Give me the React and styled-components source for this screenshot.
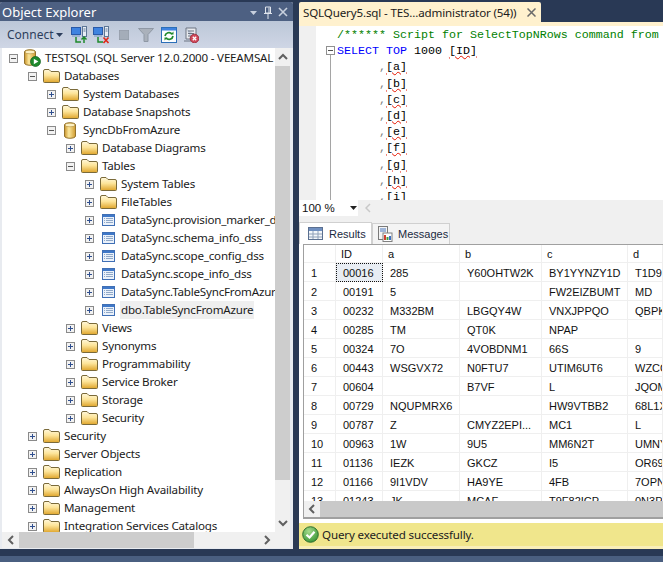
import React from "react";
import styled, { createGlobalStyle } from "styled-components";

const treeItems = [
  { level: 0, icon: "server", open: true, label: "TESTSQL (SQL Server 12.0.2000 - VEEAMSAL" },
  { level: 1, icon: "folder", open: true, label: "Databases" },
  { level: 2, icon: "folder", label: "System Databases" },
  { level: 2, icon: "folder", label: "Database Snapshots" },
  { level: 2, icon: "db", open: true, label: "SyncDbFromAzure" },
  { level: 3, icon: "folder", label: "Database Diagrams" },
  { level: 3, icon: "folder", open: true, label: "Tables" },
  { level: 4, icon: "folder", label: "System Tables" },
  { level: 4, icon: "folder", label: "FileTables" },
  { level: 4, icon: "table", label: "DataSync.provision_marker_dss" },
  { level: 4, icon: "table", label: "DataSync.schema_info_dss" },
  { level: 4, icon: "table", label: "DataSync.scope_config_dss" },
  { level: 4, icon: "table", label: "DataSync.scope_info_dss" },
  { level: 4, icon: "table", label: "DataSync.TableSyncFromAzure_dss" },
  { level: 4, icon: "table", label: "dbo.TableSyncFromAzure", selected: true },
  { level: 3, icon: "folder", label: "Views" },
  { level: 3, icon: "folder", label: "Synonyms" },
  { level: 3, icon: "folder", label: "Programmability" },
  { level: 3, icon: "folder", label: "Service Broker" },
  { level: 3, icon: "folder", label: "Storage" },
  { level: 3, icon: "folder", label: "Security" },
  { level: 1, icon: "folder", label: "Security" },
  { level: 1, icon: "folder", label: "Server Objects" },
  { level: 1, icon: "folder", label: "Replication" },
  { level: 1, icon: "folder", label: "AlwaysOn High Availability" },
  { level: 1, icon: "folder", label: "Management" },
  { level: 1, icon: "folder", label: "Integration Services Catalogs" },
];

const columns = ["a", "b", "c", "d", "e", "f", "g", "h", "i"];

const rows = [
  ["00016", "285", "Y60OHTW2K", "BY1YYNZY1D", "T1D9"],
  ["00191", "5", "", "FW2EIZBUMT", "MD"],
  ["00232", "M332BM", "LBGQY4W", "VNXJPPQO", "QBPK"],
  ["00285", "TM", "QT0K", "NPAP", ""],
  ["00324", "7O", "4VOBDNM1", "66S", "9"],
  ["00443", "WSGVX72", "N0FTU7", "UTIM6UT6", "WZCC"],
  ["00604", "", "B7VF", "L", "JQOM"],
  ["00729", "NQUPMRX6", "", "HW9VTBB2", "68L1X"],
  ["00787", "Z", "CMYZ2EPI...", "MC1", "L"],
  ["00963", "1W", "9U5", "MM6N2T", "UMNY"],
  ["01136", "IEZK", "GKCZ", "I5", "OR69"],
  ["01166", "9I1VDV", "HA9YE", "4FB", "7OPN"],
  ["01243", "JK", "MCAF", "T9F82ICP", "0N3P"],
];

const GlobalStyle = createGlobalStyle`
  html, body {
    margin: 0;
    background: #293955;
  }
`;

const Page = styled.div`
  width: 663px;
  height: 562px;
  overflow: hidden;
  display: flex;
  flex-direction: column;
  font-family: "Noto Sans", sans-serif;
  font-size: 12px;
  color: #1b1b1b;
`;

const Main = styled.div`
  height: 549px;
  padding-top: 2px;
  box-sizing: border-box;
  display: flex;
  gap: 6px;
`;

const BottomBar = styled.div`
  height: 6px;
  margin-top: 7px;
  background: #4a5f80;
`;

const LeftPanel = styled.div`
  width: 293px;
  flex: none;
  display: flex;
  flex-direction: column;
  background: #e8ebf0;
  border-radius: 2px 2px 0 0;
  overflow: hidden;
`;

const PanelTitle = styled.div`
  height: 19px;
  flex: none;
  box-sizing: border-box;
  display: flex;
  align-items: center;
  padding: 1px 5px 0 2px;
  background: #4d6082;
  color: #fff;
  font-size: 13px;
`;

const TitleText = styled.span`
  flex: 1;
`;

const TitleButtons = styled.div`
  display: flex;
  align-items: center;
  gap: 6px;
`;

const Toolbar = styled.div`
  height: 27px;
  flex: none;
  display: flex;
  align-items: center;
  padding-left: 7px;
  background: linear-gradient(#bcc7d8, #cfd6e5);
  color: #2d3e5c;
`;

const ConnectLabel = styled.span`
  width: 46px;
  font-size: 12px;
`;

const ConnectCaret = styled.svg`
  margin-left: 3px;
`;

const ToolIcon = styled.svg`
  flex: none;
  margin-left: ${(p) => p.$gap}px;
`;

const PanelBody = styled.div`
  flex: 1;
  min-height: 0;
  display: grid;
  grid-template-columns: 273px 15px;
  grid-template-rows: 484px 16px;
  padding: 0 3px 1px 2px;
`;

const Tree = styled.div`
  background: #fff;
  overflow: hidden;
  padding-top: 1px;
`;

const TreeRow = styled.div`
  height: 18px;
  display: flex;
  align-items: center;
  white-space: nowrap;
  padding-left: ${(p) => 7 + p.$level * 19}px;
`;

const Expander = styled.svg`
  flex: none;
  width: 9px;
  height: 9px;
`;

const IconSlot = styled.span`
  flex: none;
  display: flex;
  align-items: center;
  justify-content: center;
  width: 18px;
  margin-left: 5px;
`;

const TreeLabel = styled.span`
  margin-left: 3px;
  padding: 0 1px;
  font-size: 11.6px;
  line-height: 18px;
  letter-spacing: -0.2px;
  background: ${(p) => (p.$selected ? "#efefef" : "transparent")};
`;

const VScroll = styled.div`
  display: flex;
  flex-direction: column;
  background: #f0f0f0;
`;

const HScroll = styled.div`
  display: flex;
  background: #f0f0f0;
`;

const ScrollCorner = styled.div`
  background: #f0f0f0;
`;

const ScrollEnd = styled.div`
  flex: none;
  display: flex;
  align-items: center;
  justify-content: center;
  width: ${(p) => p.$w}px;
  height: ${(p) => p.$h}px;
`;

const ScrollThumb = styled.div`
  flex: none;
  background: #cdcdcd;
  width: ${(p) => p.$w};
  height: ${(p) => p.$h};
`;

const ScrollRest = styled.div`
  flex: 1;
  min-width: 0;
`;

const RightPanel = styled.div`
  flex: 1;
  min-width: 0;
  display: flex;
  flex-direction: column;
  background: #f5f5f5;
`;

const TabStrip = styled.div`
  height: 24px;
  flex: none;
  display: flex;
  align-items: flex-start;
  background: linear-gradient(#293955 20px, #fff1ce 20px);
`;

const DocTab = styled.div`
  width: 242px;
  height: 24px;
  display: flex;
  align-items: center;
  justify-content: space-between;
  box-sizing: border-box;
  padding: 0 5px 3px 4px;
  background: #fff1ce;
  border-radius: 2px 2px 0 0;
  color: #1b1b1b;
  font-size: 11.6px;
  white-space: nowrap;
  letter-spacing: -0.15px;
`;

const Editor = styled.div`
  height: 174px;
  flex: none;
  display: flex;
  overflow: hidden;
  background: #fff;
  position: relative;
`;

const Gutter = styled.div`
  width: 17px;
  flex: none;
  background: #f0f0f0;
`;

const FoldColumn = styled.div`
  width: 21px;
  flex: none;
  position: relative;
`;

const FoldBox = styled.svg`
  position: absolute;
  left: 10px;
  top: 20px;
`;

const FoldLine = styled.div`
  position: absolute;
  left: 14px;
  top: 29px;
  bottom: 0;
  width: 1px;
  background: #a5a5a5;
`;

const Code = styled.pre`
  margin: 0;
  padding-top: 1px;
  font-family: "Liberation Mono", monospace;
  font-size: 11.67px;
  line-height: 16.2px;
  color: #000;
`;

const Comment = styled.span`
  color: #008000;
`;

const Keyword = styled.span`
  color: #0000ff;
`;

const Squiggle = styled.span`
  text-decoration: underline wavy #e51400 1px;
  text-underline-offset: 1px;
`;

const Grey = styled.span`
  color: #808080;
`;

const ZoomBar = styled.div`
  height: 16px;
  flex: none;
  display: flex;
  align-items: center;
  background: #f0f0f0;
`;

const ZoomCombo = styled.div`
  width: 59px;
  height: 16px;
  box-sizing: border-box;
  padding: 0 1px 0 3px;
  display: flex;
  align-items: center;
  justify-content: space-between;
  background: #fff;
  font-family: "Liberation Sans", sans-serif;
  font-size: 11.5px;
  color: #111;
`;

const ZoomArrow = styled.svg`
  margin-left: 7px;
`;

const ResultTabs = styled.div`
  height: 28px;
  flex: none;
  box-sizing: border-box;
  padding-top: 6px;
  display: flex;
  align-items: flex-end;
  background: #f0f0f0;
`;

const ResultTab = styled.div`
  box-sizing: border-box;
  width: ${(p) => p.$w}px;
  height: ${(p) => (p.$active ? 22 : 21)}px;
  display: flex;
  align-items: center;
  gap: ${(p) => (p.$active ? 6 : 5)}px;
  padding-left: ${(p) => (p.$active ? 8 : 5)}px;
  background: ${(p) => (p.$active ? "#fff" : "#f4f4f4")};
  border: 1px solid #d0d0d0;
  border-bottom: none;
  font-family: "Liberation Sans", sans-serif;
  font-size: 11px;
  color: #1a2a40;
`;

const ResultArea = styled.div`
  height: 279px;
  flex: none;
  box-sizing: border-box;
  padding: 0 0 4px 4px;
  background: #fff;
`;

const GridFrame = styled.div`
  height: 275px;
  box-sizing: border-box;
  border: solid #a0a0a0;
  border-width: 1px 0 2px 1px;
  display: flex;
  flex-direction: column;
  overflow: hidden;
`;

const GridBody = styled.div`
  height: 256px;
  flex: none;
  overflow: hidden;
  background: #fff;
`;

const GridRow = styled.div`
  display: grid;
  grid-template-columns: 32px 47px 77px 82px 86px 1fr;
  height: ${(p) => (p.$head ? 18 : 19)}px;
  font-family: "Liberation Sans", sans-serif;
  font-size: 11px;
  color: #111;
`;

const Cell = styled.div`
  box-sizing: border-box;
  display: flex;
  align-items: center;
  white-space: nowrap;
  overflow: hidden;
  padding: ${(p) => (p.$head ? "0 0 0 5px" : "1px 0 0 7px")};
  border-right: 1px solid #efefef;
  border-bottom: 1px solid #efefef;
  ${(p) => p.$current && "background: #e8edf3; outline: 1px dotted #111; outline-offset: -1px;"}
`;

const GridScroll = styled.div`
  height: 16px;
  flex: none;
  display: flex;
  background: #c9c9c9;
`;

const GridScrollEnd = styled.div`
  width: 16px;
  flex: none;
  display: flex;
  align-items: center;
  justify-content: center;
  background: #f0f0f0;
`;

const StatusBar = styled.div`
  height: 26px;
  flex: none;
  box-sizing: border-box;
  border-bottom: 3px solid #f8eeb8;
  display: flex;
  align-items: center;
  gap: 3px;
  padding-left: 3px;
  background: #f0e68c;
  font-size: 11.6px;
  letter-spacing: -0.15px;
  color: #222;
`;

function Chevron({ dir }) {
  const paths = {
    up: "M1 6 L5 2 L9 6",
    down: "M1 2 L5 6 L9 2",
    left: "M6 1 L2 5 L6 9",
    right: "M2 1 L6 5 L2 9",
  };
  const vertical = dir === "up" || dir === "down";
  return (
    <svg width={vertical ? 10 : 8} height={vertical ? 8 : 10}>
      <path d={paths[dir]} fill="none" stroke="#606060" strokeWidth="2" />
    </svg>
  );
}

function FolderIcon() {
  return (
    <svg width="17" height="14" viewBox="0 0 17 14">
      <defs>
        <linearGradient id="folderFill" x1="0" y1="0" x2="0" y2="1">
          <stop offset="0" stopColor="#fff8dc" />
          <stop offset="0.45" stopColor="#fde59a" />
          <stop offset="1" stopColor="#dfa52c" />
        </linearGradient>
      </defs>
      <path d="M0.5 12.5 V2 Q0.5 0.5 2 0.5 H6 L8 2.5 H15 Q16.5 2.5 16.5 4 V12.5 Q16.5 13.5 15.5 13.5 H1.5 Q0.5 13.5 0.5 12.5 Z" fill="url(#folderFill)" stroke="#7a6a3a" />
    </svg>
  );
}

function TableIcon() {
  return (
    <svg width="13" height="12" viewBox="0 0 13 12">
      <rect x="0.5" y="0.5" width="12" height="11" fill="#eaf1fa" stroke="#3f6fb5" />
      <rect x="1" y="1" width="11" height="2" fill="#3f78c8" />
      <path d="M4 4.5 H11 M4 6.5 H11 M4 8.5 H11 M2 4.5 H3 M2 6.5 H3 M2 8.5 H3" stroke="#8fa8c8" />
    </svg>
  );
}

function DbIcon() {
  return (
    <svg width="12" height="17" viewBox="0 0 12 17">
      <defs>
        <linearGradient id="dbFill" x1="0" y1="0" x2="1" y2="0">
          <stop offset="0" stopColor="#c9932a" />
          <stop offset="0.4" stopColor="#fbe79c" />
          <stop offset="1" stopColor="#cf9a2e" />
        </linearGradient>
      </defs>
      <path d="M0.5 3 C0.5 0 11.5 0 11.5 3 V14 C11.5 17 0.5 17 0.5 14 Z" fill="url(#dbFill)" stroke="#94732c" />
      <ellipse cx="6" cy="3" rx="5" ry="1.8" fill="#fdf1c2" stroke="#b08c3c" strokeWidth="0.6" />
    </svg>
  );
}

function ServerIcon() {
  return (
    <svg width="18" height="18" viewBox="0 0 18 18">
      <defs>
        <linearGradient id="srvFill" x1="0" y1="0" x2="1" y2="0">
          <stop offset="0" stopColor="#c9932a" />
          <stop offset="0.4" stopColor="#fbe79c" />
          <stop offset="1" stopColor="#cf9a2e" />
        </linearGradient>
      </defs>
      <path d="M1.5 3 C1.5 0 12.5 0 12.5 3 V14 C12.5 17 1.5 17 1.5 14 Z" fill="url(#srvFill)" stroke="#94732c" />
      <ellipse cx="7" cy="3" rx="5" ry="1.8" fill="#fdf1c2" stroke="#b08c3c" strokeWidth="0.6" />
      <circle cx="12.5" cy="12.5" r="5" fill="#1f8a2c" stroke="#0f5f1c" strokeWidth="0.7" />
      <path d="M10.8 9.8 L15.4 12.5 L10.8 15.2 Z" fill="#fff" />
    </svg>
  );
}

function TreeIcon({ type }) {
  if (type === "server") return <ServerIcon />;
  if (type === "db") return <DbIcon />;
  if (type === "table") return <TableIcon />;
  return <FolderIcon />;
}

function ExpandBox({ open }) {
  return (
    <Expander viewBox="0 0 9 9">
      <rect x="0.5" y="0.5" width="8" height="8" fill="#f2f2f2" stroke="#8a8a8a" />
      <path d={open ? "M2 4.5 H7" : "M2 4.5 H7 M4.5 2 V7"} stroke={open ? "#555" : "#2f4f8f"} />
    </Expander>
  );
}

function ConnectIcon({ gap, badge }) {
  return (
    <ToolIcon $gap={gap} width="17" height="19" viewBox="0 0 17 19">
      <rect x="0.5" y="2.5" width="9" height="7" fill="#3f83e0" stroke="#2a5aa8" />
      <rect x="1" y="10" width="8" height="2" fill="#9db4d2" />
      <rect x="11.5" y="1.5" width="4" height="10" fill="#e8eef6" stroke="#5d7695" />
      <path d="M12.5 4 H14.5 M12.5 6 H14.5" stroke="#5d7695" />
      <path d="M5 12 V17 H10" fill="none" stroke="#1f8a2c" strokeWidth="1.5" />
      {badge === "add" ? (
        <path d="M13 18 V12 M10.5 14.5 L13 12 L15.5 14.5" fill="none" stroke="#1f8a2c" strokeWidth="1.5" />
      ) : (
        <path d="M10.5 12.5 L15.5 18 M15.5 12.5 L10.5 18" stroke="#e02a1c" strokeWidth="1.7" />
      )}
    </ToolIcon>
  );
}

function StatusIcon() {
  return (
    <svg width="17" height="17" viewBox="0 0 17 17">
      <defs>
        <radialGradient id="okFill" cx="0.4" cy="0.3" r="0.8">
          <stop offset="0" stopColor="#a6dc8c" />
          <stop offset="1" stopColor="#2f8f2f" />
        </radialGradient>
      </defs>
      <circle cx="8.5" cy="8.5" r="7.8" fill="url(#okFill)" stroke="#2f6f2f" />
      <path d="M4.5 8.8 L7.5 11.5 L12.5 5.8" fill="none" stroke="#fff" strokeWidth="2.2" />
    </svg>
  );
}

function App() {
  return (
    <Page>
      <GlobalStyle />
      <Main>
        <LeftPanel>
          <PanelTitle>
            <TitleText>Object Explorer</TitleText>
            <TitleButtons>
              <svg width="9" height="9" viewBox="0 0 9 9">
                <path d="M1 3 H8 L4.5 7 Z" fill="#c8d0de" />
              </svg>
              <svg width="8" height="13" viewBox="0 0 8 13">
                <path d="M1.5 1 H6.5 V7 H1.5 Z M0 7.5 H8 M4 8 V13 M5 1.5 V7" fill="none" stroke="#dfe4ec" />
              </svg>
              <svg width="10" height="10" viewBox="0 0 10 10">
                <path d="M1 1 L9 9 M9 1 L1 9" stroke="#c8d0de" strokeWidth="1.6" />
              </svg>
            </TitleButtons>
          </PanelTitle>
          <Toolbar>
            <ConnectLabel>Connect</ConnectLabel>
            <ConnectCaret width="7" height="4" viewBox="0 0 7 4">
              <path d="M0 0 H7 L3.5 4 Z" fill="#2d3e5c" />
            </ConnectCaret>
            <ConnectIcon gap={8} badge="add" />
            <ConnectIcon gap={5} badge="remove" />
            <ToolIcon $gap={9} width="10" height="10" viewBox="0 0 10 10">
              <rect width="10" height="10" fill="#a4adb9" stroke="#8f98a5" />
            </ToolIcon>
            <ToolIcon $gap={9} width="16" height="14" viewBox="0 0 16 14">
              <path d="M0.5 0.5 H15.5 L10 6.5 V13.5 H6 V6.5 Z" fill="#aab1bb" stroke="#8f98a5" />
            </ToolIcon>
            <ToolIcon $gap={7} width="16" height="16" viewBox="0 0 16 16">
              <rect x="0.5" y="0.5" width="15" height="15" fill="#fbfdff" stroke="#2c6fb8" />
              <rect x="1" y="1" width="14" height="2.5" fill="#3f83e0" />
              <path d="M4 9 A4 4 0 0 1 11 7 M12 9 A4 4 0 0 1 5 11" fill="none" stroke="#1f8a2c" strokeWidth="1.7" />
              <path d="M9.5 7.5 H12.5 V4.5 Z M6.5 10.5 H3.5 V13.5 Z" fill="#1f8a2c" />
            </ToolIcon>
            <ToolIcon $gap={6} width="16" height="16" viewBox="0 0 16 16">
              <path d="M3 1 H13 V9 M3 1 V12 H8 M1 14 H8 M5 4 H11 M5 6.5 H11 M5 9 H9" fill="#e8eaee" stroke="#6c7482" />
              <circle cx="11.5" cy="11.5" r="4.3" fill="#d0485a" stroke="#a03040" />
              <path d="M9.8 9.8 L13.2 13.2 M13.2 9.8 L9.8 13.2" stroke="#fff" strokeWidth="1.3" />
            </ToolIcon>
          </Toolbar>
          <PanelBody>
            <Tree>
              {treeItems.map((item, i) => (
                <TreeRow key={i} $level={item.level}>
                  <ExpandBox open={item.open} />
                  <IconSlot>
                    <TreeIcon type={item.icon} />
                  </IconSlot>
                  <TreeLabel $selected={item.selected}>{item.label}</TreeLabel>
                </TreeRow>
              ))}
            </Tree>
            <VScroll>
              <ScrollEnd $w={15} $h={18}>
                <Chevron dir="up" />
              </ScrollEnd>
              <ScrollThumb $w="15px" $h="414px" />
              <ScrollRest />
              <ScrollEnd $w={15} $h={18}>
                <Chevron dir="down" />
              </ScrollEnd>
            </VScroll>
            <HScroll>
              <ScrollEnd $w={17} $h={16}>
                <Chevron dir="left" />
              </ScrollEnd>
              <ScrollThumb $w="175px" $h="16px" />
              <ScrollRest />
              <ScrollEnd $w={17} $h={16}>
                <Chevron dir="right" />
              </ScrollEnd>
            </HScroll>
            <ScrollCorner />
          </PanelBody>
        </LeftPanel>
        <RightPanel>
          <TabStrip>
            <DocTab>
              <span>SQLQuery5.sql - TES...administrator (54))</span>
              <svg width="9" height="9" viewBox="0 0 9 9">
                <path d="M0.5 0.5 L8.5 8.5 M8.5 0.5 L0.5 8.5" stroke="#6a6a6a" strokeWidth="1.5" />
              </svg>
            </DocTab>
          </TabStrip>
          <Editor>
            <Gutter />
            <FoldColumn>
              <FoldBox width="9" height="9" viewBox="0 0 9 9">
                <rect x="0.5" y="0.5" width="8" height="8" fill="#fff" stroke="#909090" />
                <path d="M2 4.5 H7" stroke="#505050" />
              </FoldBox>
              <FoldLine />
            </FoldColumn>
            <Code>
              <Comment>{"/****** Script for SelectTopNRows command from SSMS  ******/"}</Comment>
              {"\n"}
              <Keyword>SELECT TOP</Keyword> 1000 <Squiggle>[ID]</Squiggle>
              {columns.map((c) => (
                <React.Fragment key={c}>
                  {"\n      "}
                  <Grey>,</Grey>
                  <Squiggle>[{c}]</Squiggle>
                </React.Fragment>
              ))}
            </Code>
          </Editor>
          <ZoomBar>
            <ZoomCombo>
              <span>100 %</span>
              <svg width="7" height="4" viewBox="0 0 7 4">
                <path d="M0 0 H7 L3.5 4 Z" fill="#222" />
              </svg>
            </ZoomCombo>
            <ZoomArrow width="6" height="10" viewBox="0 0 6 10">
              <path d="M5 1 L1 5 L5 9" fill="none" stroke="#c8c8c8" strokeWidth="1.5" />
            </ZoomArrow>
          </ZoomBar>
          <ResultTabs>
            <ResultTab $w={73} $active>
              <svg width="15" height="13" viewBox="0 0 15 13">
                <rect x="0.5" y="0.5" width="14" height="12" fill="#f4f7fb" stroke="#5a6f90" />
                <rect x="1" y="1" width="13" height="3" fill="#6f8fc0" />
                <path d="M5 4 V12 M10 4 V12 M1 7 H14 M1 10 H14" stroke="#8fa0b8" />
              </svg>
              Results
            </ResultTab>
            <ResultTab $w={78}>
              <svg width="15" height="16" viewBox="0 0 15 16">
                <rect x="0.5" y="0.5" width="9" height="13" fill="#f4f4f4" stroke="#7a7a7a" />
                <path d="M2 3 H8 M2 5 H8" stroke="#4a78c0" />
                <rect x="5" y="7" width="9" height="8.5" fill="#fff" stroke="#808080" />
                <path d="M7 9 V14" stroke="#d04030" strokeWidth="2" />
                <path d="M9.5 11 V14" stroke="#3f9a3f" strokeWidth="2" />
                <path d="M12 10 V14" stroke="#3f6fc0" strokeWidth="2" />
              </svg>
              Messages
            </ResultTab>
          </ResultTabs>
          <ResultArea>
            <GridFrame>
              <GridBody>
                <GridRow $head>
                  <Cell $head />
                  <Cell $head>ID</Cell>
                  <Cell $head>a</Cell>
                  <Cell $head>b</Cell>
                  <Cell $head>c</Cell>
                  <Cell $head>d</Cell>
                </GridRow>
                {rows.map((row, i) => (
                  <GridRow key={row[0]}>
                    <Cell>{i + 1}</Cell>
                    {row.map((value, j) => (
                      <Cell key={j} $current={i === 0 && j === 0}>
                        {value}
                      </Cell>
                    ))}
                  </GridRow>
                ))}
              </GridBody>
              <GridScroll>
                <GridScrollEnd>
                  <Chevron dir="left" />
                </GridScrollEnd>
              </GridScroll>
            </GridFrame>
          </ResultArea>
          <StatusBar>
            <StatusIcon />
            Query executed successfully.
          </StatusBar>
        </RightPanel>
      </Main>
      <BottomBar />
    </Page>
  );
}

export default App;
